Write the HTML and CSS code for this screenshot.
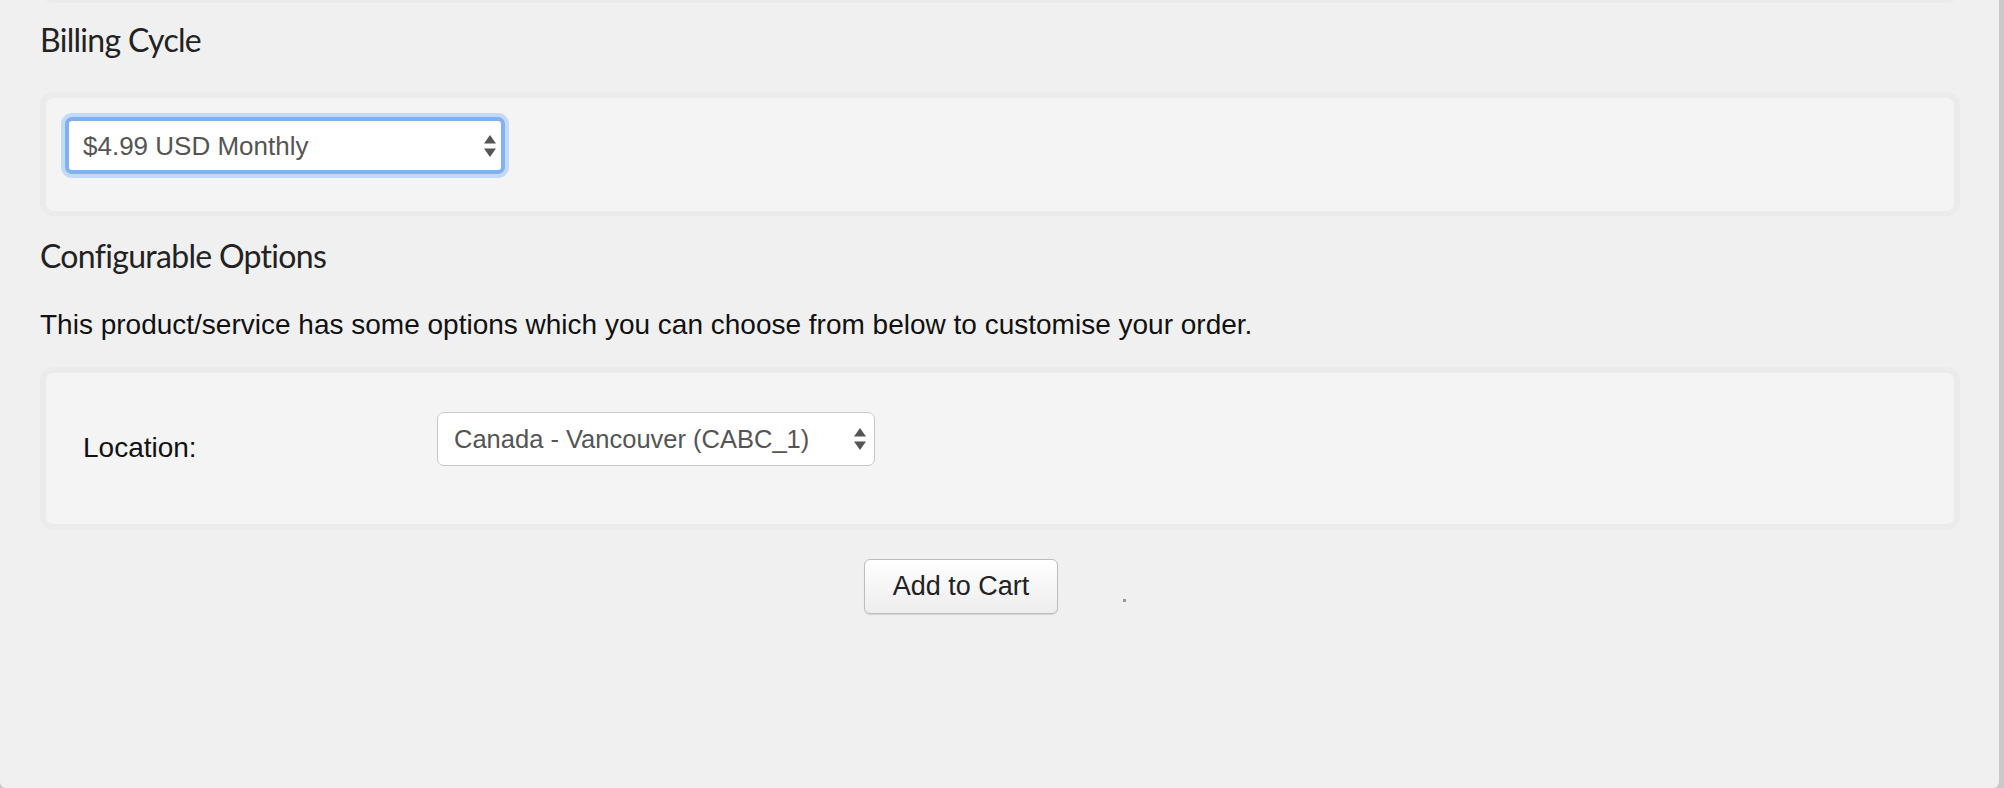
FILE: index.html
```html
<!DOCTYPE html>
<html lang="en">
<head>
<meta charset="utf-8">
<title>Configure</title>
<link rel="stylesheet" href="styles.css">
</head>
<body>
<div class="window">
  <div class="panel panel-prev"></div>

  <h3 class="heading heading-billing">Billing Cycle</h3>
  <div class="panel panel-billing">
    <div class="select-wrap select-wrap-focus">
      <select class="select select-focus" aria-label="Billing Cycle">
        <option>$4.99 USD Monthly</option>
      </select>
      <svg class="arrows" viewBox="0 0 12 22" width="12" height="22" aria-hidden="true">
        <polygon points="6,0 12,8.5 0,8.5"/>
        <polygon points="0,13.5 12,13.5 6,22"/>
      </svg>
    </div>
  </div>

  <h3 class="heading heading-config">Configurable Options</h3>
  <p class="intro">This product/service has some options which you can choose from below to customise your order.</p>

  <div class="panel panel-options">
    <div class="option-row">
      <label class="option-label">Location:</label>
      <div class="select-wrap">
        <select class="select select-plain" aria-label="Location">
          <option>Canada - Vancouver (CABC_1)</option>
        </select>
        <svg class="arrows" viewBox="0 0 12 22" width="12" height="22" aria-hidden="true">
          <polygon points="6,0 12,8.5 0,8.5"/>
          <polygon points="0,13.5 12,13.5 6,22"/>
        </svg>
      </div>
    </div>
  </div>

  <div class="actions">
    <button class="btn" type="button">Add to Cart</button>
    <span class="loader-dot"></span>
  </div>
</div>
</body>
</html>
```

FILE: styles.css
```css
html, body {
  margin: 0;
  height: 100%;
}

body {
  background: #c9c9c9;
  font-family: "Liberation Sans", Arial, sans-serif;
  overflow: hidden;
}

.window {
  width: 1999px;
  height: 788px;
  box-sizing: border-box;
  background: #f0f0f0;
  border-radius: 0 0 6px 6px;
  padding: 0 39px 0 40px;
  overflow: hidden;
}

.panel {
  background: #f4f4f4;
  border: 6px solid #ebebeb;
  border-radius: 13px;
}

.panel-prev {
  height: 20px;
  margin-top: -29px;
}

.heading {
  font-family: Lato, "Open Sans", sans-serif;
  font-weight: 400;
  font-size: 32px;
  line-height: 38px;
  letter-spacing: -0.7px;
  color: #222;
  margin: 0;
}

.heading-billing {
  margin: 18px 0 33px 0;
}

.heading-config {
  margin: 21px 0 30px 0;
}

.intro {
  font-size: 28px;
  line-height: 40px;
  color: #111;
  margin: 0 0 22px 0;
}

.panel-billing {
  padding: 19px 19px 37px 19px;
  border-bottom-width: 5px;
}

.select-wrap {
  position: relative;
  display: inline-block;
}

.select {
  -webkit-appearance: none;
  appearance: none;
  font-family: "Liberation Sans", Arial, sans-serif;
  font-size: 26px;
  color: #555;
  background: #fff;
  box-sizing: border-box;
  margin: 0;
  outline: none;
  display: block;
}

.select-focus {
  width: 440px;
  height: 57px;
  border: 4px solid #80b1f1;
  border-radius: 7px;
  box-shadow: 0 0 0 4px #c3daf7;
  padding: 0 40px 0 14px;
}

.select-plain {
  width: 438px;
  height: 54px;
  font-size: 25.5px;
  border: 1px solid #c9c9c9;
  border-radius: 7px;
  padding: 0 40px 0 16px;
}

.arrows {
  position: absolute;
  right: 9px;
  top: 50%;
  margin-top: -11px;
  fill: #555;
  pointer-events: none;
}

.panel-options {
  padding: 39px 19px 56px 37px;
}

.option-row {
  display: flex;
  align-items: flex-start;
}

.option-label {
  width: 354px;
  flex: none;
  font-size: 28px;
  line-height: 40px;
  color: #111;
  margin-top: 16px;
}

.actions {
  display: flex;
  justify-content: center;
  align-items: flex-start;
  gap: 65px;
  margin-top: 29px;
  padding-right: 10px;
}

.btn {
  width: 194px;
  height: 55px;
  box-sizing: border-box;
  font-family: "Liberation Sans", Arial, sans-serif;
  font-size: 27px;
  color: #222;
  background: linear-gradient(#ffffff, #ededed);
  border: 1px solid #bdbdbd;
  border-radius: 6px;
  box-shadow: 0 1px 1px rgba(0, 0, 0, 0.12);
  padding: 0;
}

.loader-dot {
  width: 3px;
  height: 3px;
  background: #9a9a9a;
  margin-top: 40px;
}
```
